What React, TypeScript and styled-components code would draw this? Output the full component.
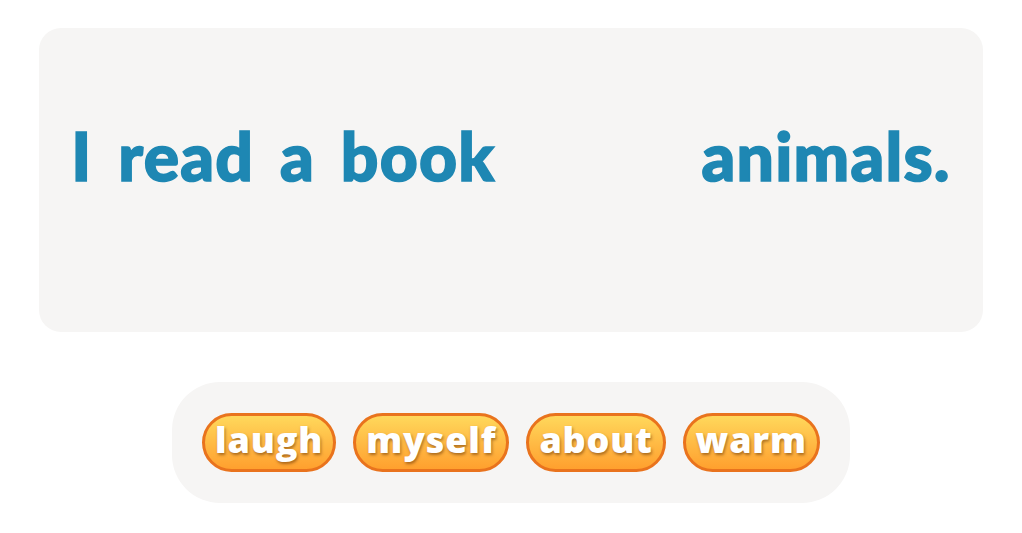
import React from "react";
import styled, { createGlobalStyle } from "styled-components";

const Global = createGlobalStyle`
  html, body { margin: 0; padding: 0; background: #ffffff; }
  body { font-family: "Lato", "Open Sans", sans-serif; }
`;

const Page = styled.div`
  display: flex;
  flex-direction: column;
  align-items: center;
  padding-top: 28px;
`;

const Card = styled.div`
  box-sizing: border-box;
  width: 944px;
  height: 304px;
  background: #f6f5f4;
  border-radius: 22px;
  display: flex;
  justify-content: center;
  align-items: flex-start;
  padding-top: 88px;
`;

const Sentence = styled.div`
  display: flex;
  align-items: baseline;
  font-family: "Lato", sans-serif;
  font-weight: 900;
  font-size: 66px;
  line-height: 80px;
  color: #1e87b3;
  -webkit-text-stroke: 1.6px #1e87b3;
  white-space: pre;
  letter-spacing: 1.2px;
  word-spacing: 9px;
`;

const Slot = styled.span<{ $w: number }>`
  display: inline-block;
  width: ${(p) => p.$w}px;
`;

const Bank = styled.div`
  box-sizing: border-box;
  margin-top: 50px;
  display: flex;
  gap: 17px;
  padding: 31px 30px;
  background: #f6f5f4;
  border-radius: 48px;
`;

const Chip = styled.button`
  box-sizing: border-box;
  height: 59px;
  padding: 0 10px 5px;
  border: 3px solid #e9731d;
  border-radius: 30px;
  background: linear-gradient(180deg, #ffd85b 0%, #ffbb45 50%, #ffa02e 100%);
  color: #ffffff;
  font-family: "Open Sans", sans-serif;
  font-weight: 800;
  font-size: 36px;
  line-height: 1;
  letter-spacing: 0.8px;
  text-shadow: 1px 2px 3px rgba(90, 40, 0, 0.5);
  cursor: pointer;
`;

const words = ["laugh", "myself", "about", "warm"];

export default function App() {
  return (
    <>
      <Global />
      <Page>
        <Card>
          <Sentence>
            <span>I read a book</span>
            <Slot $w={206} />
            <span>animals.</span>
          </Sentence>
        </Card>
        <Bank>
          {words.map((w) => (
            <Chip key={w}>{w}</Chip>
          ))}
        </Bank>
      </Page>
    </>
  );
}
